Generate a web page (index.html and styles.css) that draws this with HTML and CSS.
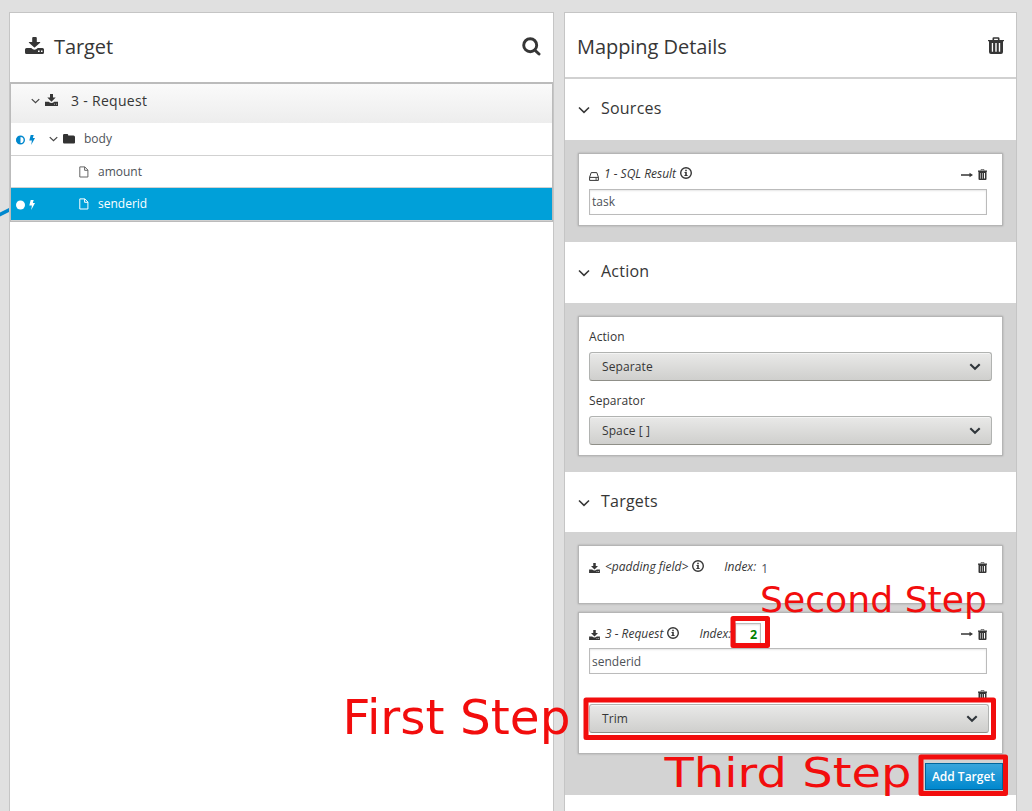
FILE: index.html
```html
<!DOCTYPE html>
<html lang="en">
<head>
<meta charset="utf-8">
<title>Mapping Details</title>
<link rel="stylesheet" href="styles.css">
</head>
<body>
<svg class="defs" aria-hidden="true">
  <symbol id="import" viewBox="0 0 19 18"><path d="M7.200 1q0-1 1-1h2.600q1 0 1 1v4h3q1 0 .3.800L10 10.200q-.5.5-1 0L4 5.800Q3.300 5 4.300 5h2.900z"/><path fill-rule="evenodd" d="M1.500 11h4.700q3.300 3.600 6.600 0h4.700Q19 11 19 12.500v3q0 1.500-1.500 1.500h-16Q0 17 0 15.500v-3Q0 11 1.500 11zM13 13.500v1.600h1.600v-1.600zm3 0v1.600h1.500v-1.600z"/></symbol>
  <symbol id="import-sm" viewBox="0 0 13 12"><path d="M5 0h3v3.500h2.700L6.500 7.700 2.300 3.500H5z"/><path fill-rule="evenodd" d="M0 7.700h3.700q2.800 2.600 5.600 0H13V12H0zM9 9.700v.9h.9v-.9zm2 0v.9h.9v-.9z"/></symbol>
  <symbol id="trash" viewBox="0 0 16 18"><path fill-rule="evenodd" d="M4.500 3V1.500Q4.500.2 5.800.2h4.400q1.300 0 1.300 1.300V3H16v1.300h-1V15q0 2-2 2H3q-2 0-2-2V4.300H0V3zm1.600 0h3.800V1.700H6.100zM3.800 6v8.800h1.300V6zm3.500 0v8.800h1.400V6zm3.500 0v8.800h1.400V6z"/></symbol>
  <symbol id="trash-sm" viewBox="0 0 9 11"><path d="M3 1.500V.5h3v1" fill="none" stroke="currentColor" stroke-opacity=".6"/><path fill-rule="evenodd" d="M0 1.500h9v1.200h-.5V10q0 1-1 1h-6q-1 0-1-1V2.700H0zM2 4v5.500h1V4zm2 0v5.500h1V4zm2 0v5.500h1V4z"/><path d="M2 4h1v5.500H2zM4 4h1v5.500H4z" opacity=".45"/></symbol>
  <symbol id="chevron" viewBox="0 0 12 8"><path d="M1 1.500l5 4.800 5-4.800" fill="none" stroke="currentColor" stroke-width="1.600"/></symbol>
  <symbol id="caret" viewBox="0 0 12 8"><path d="M1.300 1.300L6 5.800l4.700-4.500" fill="none" stroke="currentColor" stroke-width="2.100"/></symbol>
  <symbol id="info" viewBox="0 0 12 12"><circle cx="6" cy="6" r="5.300" fill="none" stroke="currentColor" stroke-width="1.400"/><path d="M5.200 2.700h1.600v1.500H5.200zM4.500 5h2.300v3h.8v1H4.400V8h.8V6h-.7z"/></symbol>
  <symbol id="arrow" viewBox="0 0 12 6"><path d="M0 2.200h8.500V.7L12 3 8.500 5.300V3.800H0z"/></symbol>
  <symbol id="file" viewBox="0 0 10 12"><path d="M.8.900h5l3.100 3.100v7H.8zM5.600.9v3.400h3.300" fill="none" stroke="currentColor" stroke-width="1"/></symbol>
  <symbol id="bolt" viewBox="0 0 6 10"><path d="M1.700 0h3L3.800 3H6L2.200 10l.7-4.600H.3z"/></symbol>
  <symbol id="drive" viewBox="0 0 10 9"><path d="M.6 5.200L2.200.6h5.600l1.600 4.600v3.200H.6zM.6 5.400h8.800M6.300 7h1.800" fill="none" stroke="currentColor" stroke-width="1"/></symbol>
</svg>
<div class="stage">
  <svg class="wire" width="9" height="11" viewBox="0 0 9 11"><path d="M-2 9.500L12 2.500" stroke="#0088ce" stroke-width="3.800"/></svg>
  <section class="panel target">
    <header class="target-head">
      <svg class="i-import-lg"><use href="#import"/></svg><h1>Target</h1>
      <svg class="search" viewBox="0 0 19 19"><circle cx="8.200" cy="8.200" r="6.500" fill="none" stroke="currentColor" stroke-width="2.900"/><path d="M12.700 13l4.300 4" stroke="currentColor" stroke-width="3" stroke-linecap="round"/></svg>
    </header>
    <div class="tree">
      <div class="doc"><svg class="chev-sm"><use href="#chevron"/></svg><svg class="i-doc"><use href="#import-sm"/></svg><span>3 - Request</span></div>
      <div class="row body"><svg class="status" viewBox="0 0 9 10"><circle cx="4.500" cy="5" r="3.800" fill="none" stroke="currentColor" stroke-width="1.400"/><path d="M4.500 1a4 4 0 0 0 0 8z"/></svg><svg class="bolt"><use href="#bolt"/></svg><svg class="chev-sm"><use href="#chevron"/></svg><svg class="folder" viewBox="0 0 12 10"><path d="M0 1.200Q0 0 1.200 0h3q1 0 1 1v.4h5.300Q12 1.400 12 3v5.500q0 1-1 1H1.100Q0 9.500 0 8.300z"/></svg><span>body</span></div>
      <div class="row leaf"><svg class="file"><use href="#file"/></svg><span>amount</span></div>
      <div class="row leaf selected"><svg class="status" viewBox="0 0 9 10"><circle cx="4.500" cy="5" r="4.500"/></svg><svg class="bolt"><use href="#bolt"/></svg><svg class="file"><use href="#file"/></svg><span>senderid</span></div>
    </div>
  </section>
  <section class="panel details">
    <header class="details-head"><h1>Mapping Details</h1><svg class="trash-lg"><use href="#trash"/></svg></header>
    <h2><svg><use href="#chevron"/></svg>Sources</h2>
    <div class="group sources">
      <div class="card">
        <div class="field-head"><svg class="drive"><use href="#drive"/></svg><em>1 - SQL Result</em><svg class="info"><use href="#info"/></svg><div class="tools"><svg class="arrow"><use href="#arrow"/></svg><svg class="trash"><use href="#trash-sm"/></svg></div></div>
        <div class="input">task</div>
      </div>
    </div>
    <h2><svg><use href="#chevron"/></svg>Action</h2>
    <div class="group actions">
      <div class="card">
        <div class="label">Action</div>
        <div class="select">Separate<svg><use href="#caret"/></svg></div>
        <div class="label second">Separator</div>
        <div class="select">Space [ ]<svg><use href="#caret"/></svg></div>
      </div>
    </div>
    <h2 class="short"><svg><use href="#chevron"/></svg>Targets</h2>
    <div class="group targets">
      <div class="card padding-card">
        <div class="field-head"><svg class="i-import"><use href="#import-sm"/></svg><em>&lt;padding field&gt;</em><svg class="info"><use href="#info"/></svg><em class="index">Index:</em><span class="one">1</span><div class="tools"><svg class="trash"><use href="#trash-sm"/></svg></div></div>
      </div>
      <div class="card request-card">
        <div class="field-head"><svg class="i-import"><use href="#import-sm"/></svg><em>3 - Request</em><svg class="info"><use href="#info"/></svg><em class="index">Index:</em><span class="index-box">2</span><div class="tools"><svg class="arrow"><use href="#arrow"/></svg><svg class="trash"><use href="#trash-sm"/></svg></div></div>
        <div class="input">senderid</div>
        <div class="remove"><svg class="trash"><use href="#trash-sm"/></svg></div>
        <div class="select trim">Trim<svg><use href="#caret"/></svg></div>
      </div>
      <div class="button-row"><button>Add Target</button></div>
    </div>
  </section>
  <svg class="notes" width="1032" height="811" viewBox="0 0 1032 811">
    <g class="outline"><rect x="733" y="618.500" width="34.500" height="27"/><rect x="586" y="700" width="407.500" height="37.500"/><rect x="921" y="757" width="84.500" height="36.500"/></g>
    <text x="342.500" y="734" font-size="47.500" textLength="228" lengthAdjust="spacingAndGlyphs">First Step</text>
    <text x="760" y="612" font-size="36" textLength="227" lengthAdjust="spacingAndGlyphs">Second Step</text>
    <text x="664.500" y="787" font-size="41" textLength="247" lengthAdjust="spacingAndGlyphs">Third Step</text>
  </svg>
</div>
</body>
</html>
```
FILE: styles.css
```css
* { box-sizing: border-box; }
body { margin: 0; background: #e0e0e0; color: #363636; font: 12px/20px "Open Sans", "Noto Sans", sans-serif; overflow: hidden; }
svg { display: block; flex: none; fill: currentColor; }
.defs { position: absolute; width: 0; height: 0; }
.stage { position: relative; display: flex; gap: 10px; height: 811px; padding: 12px 15px 0 9px; overflow: hidden; }
.wire { position: absolute; left: 0; top: 206px; }
h1, h2 { margin: 0; font-weight: 400; }
h1 { font-size: 20px; line-height: 28px; }
.panel { background: #fff; border: 1px solid #c5c5c5; height: 810px; }
.target { width: 545px; }
.details { width: 453px; }
.target-head { display: flex; align-items: center; height: 69px; padding: 0 12px 2px 15px; }
.target-head h1 { letter-spacing: -.08px; }
.i-import-lg { width: 19px; height: 18px; margin: -1px 10px 0 0; }
.search { width: 19px; height: 19px; margin-left: auto; }
.tree { border: solid #bbb; border-width: 2px 1px 1px; }
.doc { display: flex; align-items: center; height: 39px; padding: 0 0 6px 20px; background: linear-gradient(#fafafa, #ededed); font-size: 14px; letter-spacing: .3px; }
.chev-sm { width: 9px; height: 6px; color: #444; }
.doc .chev-sm { margin-top: 1px; }
.i-doc { width: 13px; height: 12px; margin: -2px 13px 0 5px; }
.row { display: flex; align-items: center; height: 32px; padding-left: 5px; color: #4d5258; }
.row.body { height: 33px; border-bottom: 1px solid #d1d1d1; }
.status { width: 9px; height: 10px; color: #0088ce; margin-top: 1px; }
.bolt { width: 6px; height: 10px; color: #0088ce; margin: 1px 0 0 4px; }
.body .chev-sm { margin: -1px 0 0 14px; }
.folder { width: 12px; height: 10px; color: #333; margin: 0 9px 0 5px; }
.leaf { padding-left: 68px; }
.file { width: 10px; height: 12px; margin-right: 9px; color: #666; }
.selected { height: 34px; margin-top: -1px; padding: 0 0 0 5px; color: #fff; background: #00a0d9; border: solid #d1d1d1; border-width: 1px 0; }
.selected .status, .selected .bolt, .selected .file { color: #fff; }
.selected .file { margin-left: 44px; }
.details-head { display: flex; align-items: center; justify-content: space-between; height: 66px; padding: 4px 12px 0; border-bottom: 2px solid #d1d1d1; }
.trash-lg { width: 16px; height: 18px; margin-top: -2px; }
.details-head h1 { letter-spacing: -.05px; }
h2 { display: flex; align-items: center; height: 61px; padding: 0 0 3px 13px; font-size: 16px; letter-spacing: .22px; }
h2.short { height: 60px; padding-bottom: 2px; }
h2 svg { width: 12px; height: 8px; margin: 4px 11px 0 0; }
.group { padding: 13px 13px 0; background: #d3d3d3; }
.sources { height: 102px; }
.actions { height: 169px; }
.targets { height: 263px; }
.card { height: 73px; padding: 9px 10px 0; background: #fff; border: 1px solid #b5b5b5; box-shadow: 0 0 2px rgba(0,0,0,.22); }
.actions .card { height: 140px; }
.field-head { display: flex; align-items: center; height: 22px; }
.drive { width: 10px; height: 9px; margin: 5px 5px 0 0; }
.info { width: 12px; height: 12px; margin: -2px 0 0 4px; }
.tools { display: flex; align-items: center; gap: 5px; margin: 1px 5px 0 auto; }
.arrow { width: 12px; height: 6px; }
.trash { width: 9px; height: 11px; }
.input { width: 398px; height: 26px; margin-top: 4px; padding: 1px 2px 0; line-height: 22px; border: 1px solid #bbb; color: #4d5258; box-shadow: inset 0 1px 2px rgba(0,0,0,.1); }
.label { height: 26px; padding-top: 1px; letter-spacing: .06px; }
.label.second { margin-top: 9px; }
.select { display: flex; align-items: center; justify-content: space-between; width: 403px; height: 29px; padding: 0 10px 0 12px; border: 1px solid #b1b3b1; border-bottom-color: #8f8f88; border-radius: 3px; background: linear-gradient(#e9e9e8, #cfcfcd); box-shadow: inset 0 1px #fff8; letter-spacing: .1px; }
.select svg { width: 12px; height: 8px; color: #30363b; }
.padding-card { height: 59px; padding-top: 10px; }
.i-import { width: 11px; height: 10px; margin: 2px 5px 0 0; }
.index { margin-left: 20px; }
.one { margin: 4px 0 0 5px; color: #4d5258; }
.request-card { height: 142px; margin-top: 8px; padding-top: 10px; }
.request-card .field-head { height: 21px; }
.request-card .info { margin-left: 4px; }
.request-card .index { margin-left: 20px; }
.index-box { width: 26px; height: 21px; margin: 0 0 0 4px; padding: 1px 3px 0; text-align: right; color: #008000; font-weight: 700; font-size: 12.500px; line-height: 19px; border: 1px solid #bbb; box-shadow: inset 0 1px 2px #0002; }
.request-card .input { padding-top: 2px; }
.remove { display: flex; justify-content: flex-end; height: 30px; padding: 16px 5px 0; }
.trim { width: 400px; }
.button-row { display: flex; justify-content: flex-end; padding-top: 9px; }
button { width: 78px; height: 27px; padding: 0 1px 0 0; border: 1px solid #00659c; background: linear-gradient(#39a5dc, #0088ce); color: #fff; font: 600 12px/20px "Open Sans", sans-serif; }
.notes { position: absolute; left: 0; top: 0; pointer-events: none; fill: #f20d0d; font-family: "DejaVu Sans", sans-serif; }
.outline { fill: none; stroke: #f20d0d; stroke-width: 5; stroke-linejoin: round; }
```
